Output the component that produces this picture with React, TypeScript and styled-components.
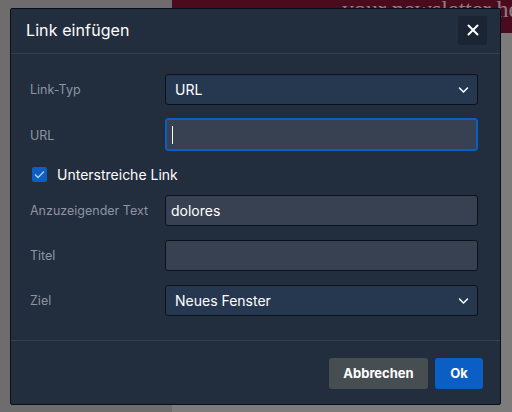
import React, { useState } from 'react';
import styled, { createGlobalStyle } from 'styled-components';

const Global = createGlobalStyle`
  html, body { margin:0; padding:0; }
  body { width:512px; height:412px; overflow:hidden; font-family: Inter, "Noto Sans", "Liberation Sans", sans-serif; }
`;

// page behind the overlay
const Page = styled.div`
  position:relative; width:512px; height:412px; overflow:hidden; display:grid; grid-template-columns:172px 340px;
  background:#6f6c6d;
`;
const Side = styled.div`background:#6f6c6d;`;
const Content = styled.div`display:flex; flex-direction:column; min-width:0; overflow:hidden; background:#7d7b7c;`;
const Banner = styled.div`
  height:33px; background:#4b0b1e; color:#8d7f84; font-family:"Liberation Serif", serif; font-size:24px;
  padding-left:170px; white-space:nowrap; overflow:hidden; line-height:18px;
`;

const Modal = styled.div`
  position:absolute; left:10px; top:8px; width:489px; height:395px;
  background:#222d3e; border:1px solid #0b0f16; border-radius:2px;
  display:flex; flex-direction:column; color:#fff;
`;
const Header = styled.div`
  height:44px; display:flex; align-items:center; justify-content:space-between;
  padding:0 13px 0 15px; border-bottom:1px solid #36414f;
`;
const Title = styled.h2`margin:0; font-size:16px; font-weight:400; letter-spacing:0.1px; margin-top:-2px;`;
const CloseBtn = styled.button`
  width:29px; height:29px; border:none; border-radius:3px; background:#1b2433; color:#fff;
  display:flex; align-items:center; justify-content:center; padding:0; margin-top:-2px; cursor:pointer;
`;
const Body = styled.div`
  flex:1; padding:20px 23px 0 19px; display:flex; flex-direction:column;
  border-bottom:1px solid #36414f;
`;
const Row = styled.div`
  display:grid; grid-template-columns:135px 313px; align-items:center; margin-bottom:14px;
`;
const Label = styled.label`font-size:12.5px; color:#8d95a1;`;
const Field = styled.div<{ $select?: boolean; $focus?: boolean }>`
  position:relative; height:31px; box-sizing:border-box; border-radius:3px;
  border:1px solid ${p => (p.$focus ? '#0b5ec4' : '#0c1119')};
  background:${p => (p.$select ? '#263850' : '#374152')};
  display:flex; align-items:center; padding:0 ${p => (p.$select ? '9px' : '5px')};
  font-size:14px; color:#fff;
  ${p => p.$focus && 'box-shadow:0 0 0 1px #0b5ec4 inset; height:33px; margin-top:-1px;'}
`;
const Chevron = styled.svg`position:absolute; right:8px; top:11px;`;
const Caret = styled.span`width:1px; height:18px; background:#fff; margin-left:1px;`;
const CheckRow = styled.label`
  display:flex; align-items:center; gap:10px; margin:0 0 12px 2px; height:18px; font-size:14px; color:#fff; cursor:pointer;
`;
const Box = styled.span`
  width:15px; height:15px; border-radius:2px; background:#0b5ec4; display:flex; align-items:center; justify-content:center;
`;
const Footer = styled.div`
  height:63px; display:flex; justify-content:flex-end; align-items:center; gap:7px; padding:0 17px 0 0;
`;
const Btn = styled.button<{ $primary?: boolean }>`
  height:31px; border:none; border-radius:3px; font-family:inherit; font-weight:700; font-size:13px; color:#fff;
  padding:0; width:${p => (p.$primary ? '48px' : '99px')};
  background:${p => (p.$primary ? '#0b5ec4' : '#474e52')}; cursor:pointer; margin-top:1px;
`;

const ChevronIcon = () => (
  <Chevron width="11" height="8" viewBox="0 0 11 8">
    <path d="M1.5 2 L5.5 6 L9.5 2" stroke="#fff" strokeWidth="1.5" fill="none" strokeLinecap="round" />
  </Chevron>
);

export default function App() {
  const [underline, setUnderline] = useState(true);
  return (
    <>
      <Global />
      <Page>
        <Side />
        <Content>
          <Banner>your newsletter headline</Banner>
        </Content>
        <Modal>
          <Header>
            <Title>Link einfügen</Title>
            <CloseBtn aria-label="Schließen">
              <svg width="12" height="12" viewBox="0 0 12 12">
                <path d="M1.5 1.5 L10.5 10.5 M10.5 1.5 L1.5 10.5" stroke="#fff" strokeWidth="2" strokeLinecap="round" />
              </svg>
            </CloseBtn>
          </Header>
          <Body>
            <Row>
              <Label>Link-Typ</Label>
              <Field $select>URL<ChevronIcon /></Field>
            </Row>
            <Row>
              <Label>URL</Label>
              <Field $focus><Caret /></Field>
            </Row>
            <CheckRow onClick={() => setUnderline(!underline)}>
              <Box>
                {underline && (
                  <svg width="11" height="9" viewBox="0 0 11 9">
                    <path d="M1 4.5 L4 7.5 L10 1.5" stroke="#b9cbe6" strokeWidth="1.4" fill="none" />
                  </svg>
                )}
              </Box>
              Unterstreiche Link
            </CheckRow>
            <Row>
              <Label>Anzuzeigender Text</Label>
              <Field>dolores</Field>
            </Row>
            <Row>
              <Label>Titel</Label>
              <Field />
            </Row>
            <Row>
              <Label>Ziel</Label>
              <Field $select>Neues Fenster<ChevronIcon /></Field>
            </Row>
          </Body>
          <Footer>
            <Btn>Abbrechen</Btn>
            <Btn $primary>Ok</Btn>
          </Footer>
        </Modal>
      </Page>
    </>
  );
}
